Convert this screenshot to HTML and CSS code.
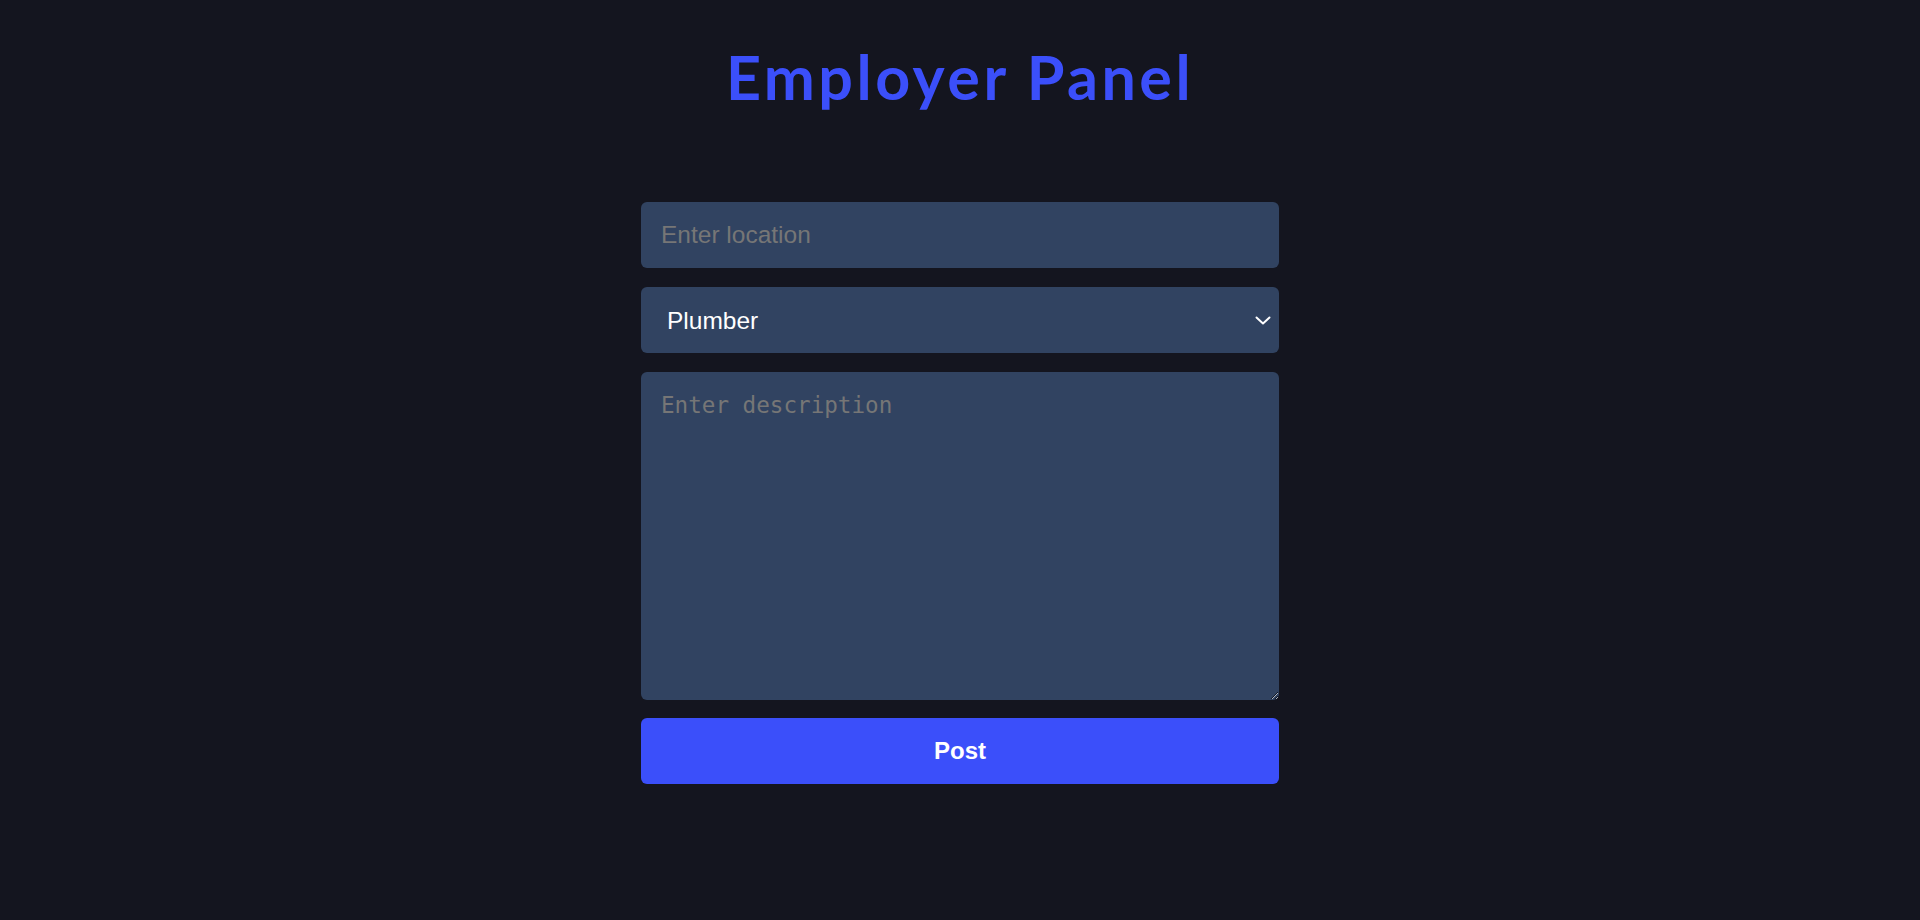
FILE: index.html
```html
<!DOCTYPE html>
<html lang="en">
<head>
  <meta charset="UTF-8" />
  <meta name="viewport" content="width=device-width, initial-scale=1" />
  <title>Employer Panel</title>
  <link rel="stylesheet" href="styles.css">
</head>
<body>
  <h1 class="titulo">Employer Panel</h1>

  <form class="painel" onsubmit="return false">
    <input type="text" id="local" placeholder="Enter location" />

    <div class="select-wrap">
      <select id="servico">
        <option value="plumber">Plumber</option>
        <option value="electrician">Electrician</option>
        <option value="carpenter">Carpenter</option>
        <option value="painter">Painter</option>
      </select>
      <svg class="seta" width="16" height="9" viewBox="0 0 16 9" aria-hidden="true">
        <path d="M1.5 1.5 L8 7.5 L14.5 1.5" fill="none" stroke="#fff" stroke-width="2" stroke-linecap="round" stroke-linejoin="round" />
      </svg>
    </div>

    <textarea id="descricao" placeholder="Enter description"></textarea>

    <button type="submit">Post</button>
  </form>
</body>
</html>
```

FILE: styles.css
```css
body {
  margin: 0;
  background: #14151f;
  font-family: "Liberation Sans", Arial, sans-serif;
  color: #fff;
}

.titulo {
  margin: 41px 0 0;
  text-align: center;
  font-family: Lato, "Open Sans", sans-serif;
  font-size: 61px;
  line-height: 72px;
  font-weight: 700;
  letter-spacing: 3.5px;
  color: #3b4ffa;
}

.painel {
  width: 638px;
  margin: 89px auto 0;
  display: flex;
  flex-direction: column;
  gap: 19px;
}

input,
select,
textarea {
  width: 100%;
  box-sizing: border-box;
  border: none;
  border-radius: 6px;
  background: #314361;
  color: #fff;
  outline: none;
}

input {
  height: 66px;
  padding: 0 20px;
  font-family: "Liberation Sans", Arial, sans-serif;
  font-size: 24.5px;
}

input::placeholder {
  color: #767676;
}

.select-wrap {
  position: relative;
}

select {
  display: block;
  height: 66px;
  padding: 0 26px;
  font-family: "Liberation Sans", Arial, sans-serif;
  font-size: 24.5px;
  appearance: none;
  -webkit-appearance: none;
}

.seta {
  position: absolute;
  right: 8px;
  top: 29px;
  pointer-events: none;
}

textarea {
  display: block;
  height: 328px;
  padding: 20px;
  font-family: "DejaVu Sans Mono", "Liberation Mono", monospace;
  font-size: 22.6px;
}

textarea::placeholder {
  color: #767676;
}

button {
  height: 66px;
  margin-top: -1px;
  border: none;
  border-radius: 6px;
  background: #3b4ffa;
  color: #fff;
  font-family: "Liberation Sans", Arial, sans-serif;
  font-size: 24px;
  font-weight: 700;
  cursor: pointer;
}
```
